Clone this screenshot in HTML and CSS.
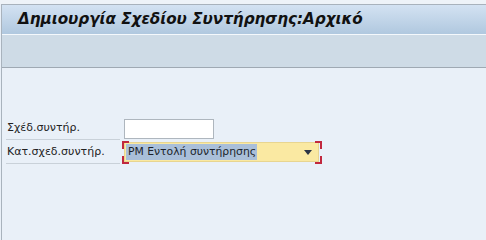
FILE: index.html
```html
<!DOCTYPE html>
<html lang="el">
<head>
<meta charset="utf-8">
<title>Δημιουργία Σχεδίου Συντήρησης:Αρχικό</title>
<link rel="stylesheet" href="styles.css">
</head>
<body>
<div class="app">
  <div class="topstrip"></div>
  <div class="frame">
    <div class="titlebar"><h1 class="title">Δημιουργία Σχεδίου Συντήρησης:Αρχικό</h1></div>
    <div class="toolbar"></div>
    <div class="main">
      <div class="form">
        <div class="label">Σχέδ.συντήρ.</div>
        <div class="field"><input class="input" type="text" value=""></div>
        <div class="label">Κατ.σχεδ.συντήρ.</div>
        <div class="field">
          <div class="focus">
            <span class="corner tl"></span><span class="corner tr"></span>
            <span class="corner bl"></span><span class="corner br"></span>
            <div class="select">
              <span class="sel-text">PM Εντολή συντήρησης</span>
              <svg class="arrow" width="8" height="5" viewBox="0 0 8 5"><path d="M0 0H8L4 5Z" fill="#2b3445"/></svg>
            </div>
          </div>
        </div>
      </div>
    </div>
  </div>
</div>
</body>
</html>
```
FILE: styles.css
```css
html, body {
  margin: 0;
  padding: 0;
  height: 100%;
}
body {
  background: #e9f0f8;
  font-family: "DejaVu Sans", Verdana, sans-serif;
  overflow: hidden;
}
.app {
  min-height: 100vh;
  display: flex;
  flex-direction: column;
}
.topstrip {
  height: 4px;
  background: #eef3f8;
}
.frame {
  flex: 1;
  display: flex;
  flex-direction: column;
  margin-left: 1px;
  border-left: 1px solid #a9b3bd;
}
.titlebar {
  height: 29px;
  border-top: 1px solid #a8b2bc;
  border-bottom: 1px solid #f4f8fc;
  background: linear-gradient(#d3e2f2, #b0c8df);
  display: flex;
  align-items: center;
  padding-left: 16px;
}
.title {
  margin: 0;
  font-family: "DejaVu Sans", Verdana, sans-serif;
  font-size: 15.2px;
  font-weight: bold;
  font-style: italic;
  color: #111;
  line-height: 1;
}
.toolbar {
  height: 32px;
  background: #cedbe6;
  border-bottom: 1px solid #9fa9b3;
}
.main {
  flex: 1;
  background: #e9f0f8;
  padding-top: 49px;
  padding-left: 4px;
}
.form {
  display: grid;
  grid-template-columns: 114px auto;
  column-gap: 4px;
  row-gap: 1px;
  align-items: start;
}
.label {
  height: 22px;
  line-height: 22px;
  border-bottom: 1px solid #c9d1d9;
  font-size: 11px;
  color: #222;
  padding-left: 1px;
  white-space: nowrap;
}
.field {
  height: 23px;
}
.input {
  box-sizing: border-box;
  display: block;
  margin: 2px 0 0 0;
  width: 90px;
  height: 20px;
  border: 1px solid #aeb6be;
  background: #fff;
  padding: 0;
  outline: none;
}
.focus {
  position: relative;
  width: 195px;
}
.select {
  box-sizing: border-box;
  margin-top: 1px;
  width: 195px;
  height: 20px;
  background: #fae9a2;
  border: 1px solid #e8d590;
  display: flex;
  align-items: center;
  padding-left: 1px;
  padding-right: 6px;
  justify-content: space-between;
}
.sel-text {
  background: #a9bfd9;
  font-size: 10.8px;
  color: #1b1f2a;
  line-height: 16px;
  padding: 0 1px 0 2px;
  white-space: nowrap;
}
.arrow {
  display: block;
}
.corner {
  position: absolute;
  width: 5px;
  height: 6px;
  border-color: #c1283e;
  border-style: solid;
  border-width: 0;
}
.corner.tl { left: -2px; top: -1px; border-top-width: 2px; border-left-width: 2px; }
.corner.tr { right: -3px; top: -1px; border-top-width: 2px; border-right-width: 2px; }
.corner.bl { left: -2px; bottom: -2px; border-bottom-width: 2px; border-left-width: 2px; }
.corner.br { right: -3px; bottom: -2px; border-bottom-width: 2px; border-right-width: 2px; }
```
